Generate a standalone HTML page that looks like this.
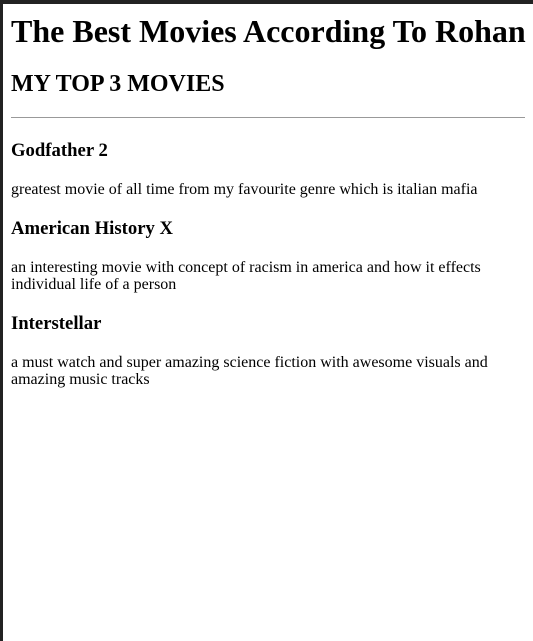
<!DOCTYPE html>
<html><head><style>
html{background:#fff}
body{margin:0;font-family:"Liberation Serif",serif;color:#000;border-left:3px solid #222;border-top:4px solid #222;height:641px;box-sizing:border-box;padding:9px 8px 8px}
h1{margin:0;font-size:32px;white-space:nowrap}
h2{font-size:24px;margin:21px 0 19px}
hr{margin:0 0 22px;border:none;border-top:1px solid #999}
h3{margin:19px 0 19px;font-size:18.72px}
p{font-size:16px;margin:17px 0;line-height:17.6px}
</style></head><body>
<h1>The Best Movies According To Rohan</h1>
<h2>MY TOP 3 MOVIES</h2>
<hr>
<h3>Godfather 2</h3>
<p>greatest movie of all time from my favourite genre which is italian mafia</p>
<h3>American History X</h3>
<p>an interesting movie with concept of racism in america and how it effects individual life of a person</p>
<h3>Interstellar</h3>
<p>a must watch and super amazing science fiction with awesome visuals and amazing music tracks</p>
</body></html>
